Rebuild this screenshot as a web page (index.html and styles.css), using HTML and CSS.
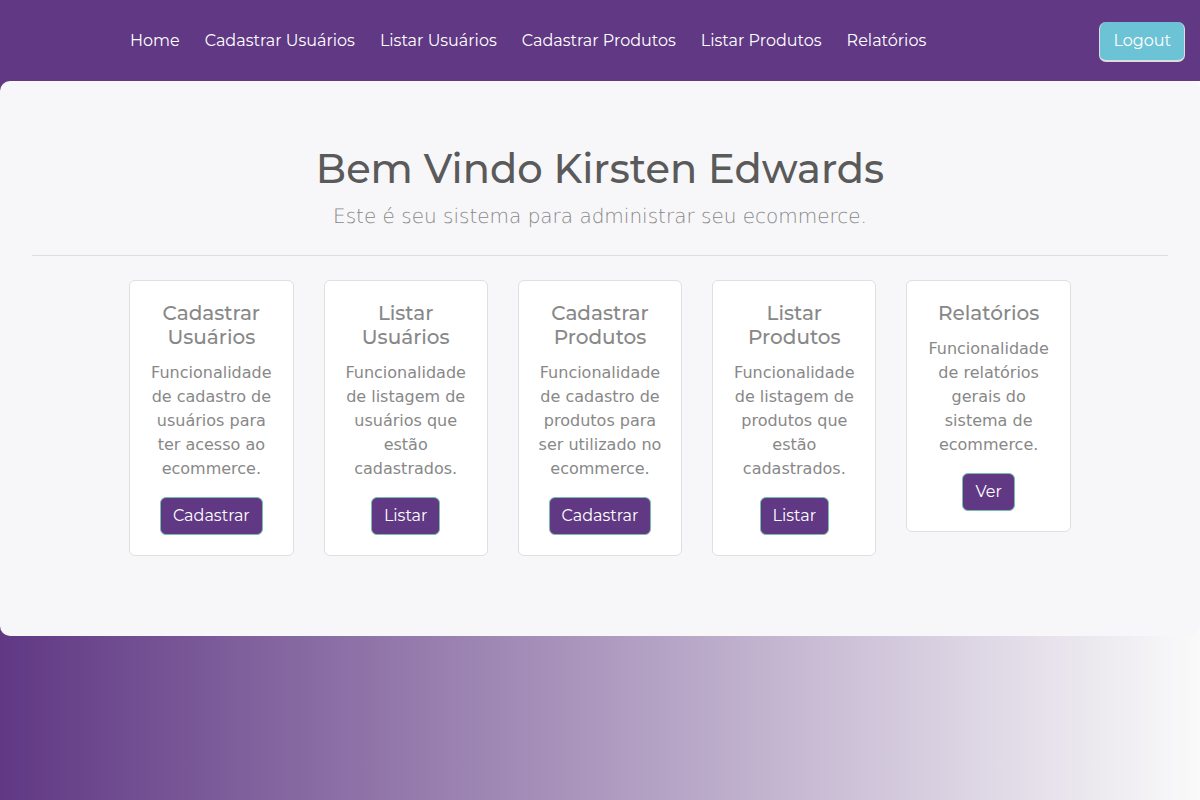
FILE: index.html
```html
<!DOCTYPE html>
<html lang="pt-BR">
<head>
<meta charset="utf-8">
<meta name="viewport" content="width=device-width, initial-scale=1">
<title>Administração do ecommerce</title>
<link rel="stylesheet" href="styles.css">
</head>
<body>
<header class="navbar">
  <nav class="menu">
    <a href="#">Home</a>
    <a href="#">Cadastrar Usuários</a>
    <a href="#">Listar Usuários</a>
    <a href="#">Cadastrar Produtos</a>
    <a href="#">Listar Produtos</a>
    <a href="#">Relatórios</a>
  </nav>
  <button class="logout" type="button">Logout</button>
</header>
<main class="panel">
  <h1 class="welcome">Bem Vindo Kirsten Edwards</h1>
  <p class="lead">Este é seu sistema para administrar seu ecommerce.</p>
  <hr class="divider">
  <div class="cards">
    <section class="card">
      <h2 class="card-title">Cadastrar Usuários</h2>
      <p class="card-text">Funcionalidade de cadastro de usuários para ter acesso ao ecommerce.</p>
      <a class="btn" href="#">Cadastrar</a>
    </section>
    <section class="card">
      <h2 class="card-title">Listar Usuários</h2>
      <p class="card-text">Funcionalidade de listagem de usuários que estão cadastrados.</p>
      <a class="btn" href="#">Listar</a>
    </section>
    <section class="card">
      <h2 class="card-title">Cadastrar Produtos</h2>
      <p class="card-text">Funcionalidade de cadastro de produtos para ser utilizado no ecommerce.</p>
      <a class="btn" href="#">Cadastrar</a>
    </section>
    <section class="card">
      <h2 class="card-title">Listar Produtos</h2>
      <p class="card-text">Funcionalidade de listagem de produtos que estão cadastrados.</p>
      <a class="btn" href="#">Listar</a>
    </section>
    <section class="card">
      <h2 class="card-title">Relatórios</h2>
      <p class="card-text">Funcionalidade de relatórios gerais do sistema de ecommerce.</p>
      <a class="btn" href="#">Ver</a>
    </section>
  </div>
</main>
</body>
</html>
```
FILE: styles.css
```css
* {
  box-sizing: border-box;
}

body {
  --purple: #603884;
  --display: Montserrat, Inter, sans-serif;
  margin: 0;
  min-height: 100vh;
  background: linear-gradient(to right, #603884, #fafafa);
  color: #888;
  font-family: "DejaVu Sans", sans-serif;
  font-size: 16px;
  line-height: 24px;
}

.navbar {
  display: flex;
  align-items: center;
  justify-content: space-between;
  padding: 20px 15px 19px 130px;
  background: var(--purple);
}

.menu {
  display: flex;
  gap: 25px;
}

.menu a {
  color: #fff;
  font-family: var(--display);
  text-decoration: none;
  white-space: nowrap;
}

.logout {
  margin-top: 2px;
  padding: 7px 13px;
  border: 1px solid #ddd;
  border-width: 0 1px 2px;
  border-radius: 7px;
  background: #6cc3d5;
  color: #fff;
  font-family: var(--display);
  font-size: 16px;
  line-height: 24px;
}

.panel {
  padding: 64px 32px 80px;
  border-radius: 10px;
  background: #f7f7f9;
  text-align: center;
}

.welcome {
  margin: 0 0 8px;
  color: #5a5a5a;
  font-family: var(--display);
  font-size: 40px;
  font-weight: 500;
  line-height: 48px;
}

.lead {
  margin: 0;
  font-size: 20px;
  font-weight: 200;
  line-height: 30px;
  text-rendering: geometricPrecision;
}

.divider {
  margin: 24px 0;
  border: 0;
  border-top: 1px solid #dedee0;
}

.cards {
  display: flex;
  align-items: flex-start;
  justify-content: center;
  gap: 30px;
}

.card {
  width: calc((100% + 30px) / 6 - 30px);
  padding: 20px 18px;
  border: 1px solid #dfdfdf;
  border-radius: 6px;
  background: #fff;
}

.card-title {
  margin: 0 0 12px;
  font-family: var(--display);
  font-size: 20px;
  font-weight: 500;
  line-height: 24px;
}

.card-text {
  margin: 0 0 16px;
}

.btn {
  display: inline-block;
  padding: 6px 12px;
  border: 1px solid #78c2ad;
  border-radius: 6px;
  background: var(--purple);
  color: #fff;
  font-family: var(--display);
  text-decoration: none;
  vertical-align: top;
}
```
